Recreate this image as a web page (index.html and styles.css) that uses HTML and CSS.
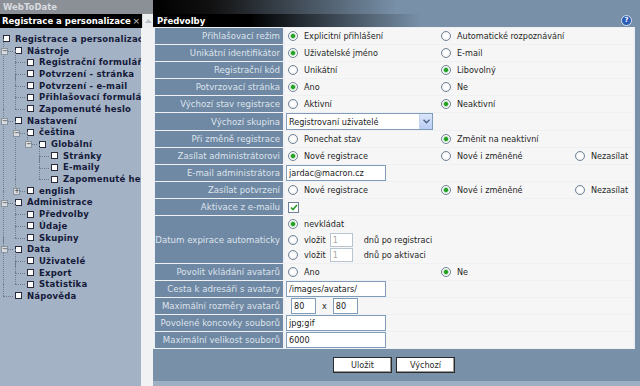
FILE: index.html
```html
<!DOCTYPE html>
<html lang="cs">

<head>
    <meta charset="UTF-8">
    <title>WebToDate | Předvolby</title>
    <link rel="stylesheet" href="styles.css">
</head>

<body>
    <div class="sidebar">
        <div class="app-title">WebToDate</div>
        <div class="panel-head">
            <div class="panel-title">
                <span>Registrace a personalizace</span>
                <span class="close">&times;</span>
            </div>
            <div class="scroll-btn">
                <svg width="7" height="4" viewBox="0 0 7 4"><path d="M0 4 L3.5 0 L7 4 Z" fill="#b9c0c8"/></svg>
            </div>
        </div>
        <div class="panel-body">
            <div class="tree">
                <ul>
                    <li><div class="row"><span class="box"></span>Registrace a personalizace</div>
                        <ul class="sub">
                            <li><span class="exp">&minus;</span><div class="row"><span class="box"></span>Nástroje</div>
                                <ul class="sub">
                                    <li><div class="row"><span class="box"></span>Registrační formulář</div></li>
                                    <li><div class="row"><span class="box"></span>Potvrzení - stránka</div></li>
                                    <li><div class="row"><span class="box"></span>Potvrzení - e-mail</div></li>
                                    <li><div class="row"><span class="box"></span>Přihlašovací formulář</div></li>
                                    <li><div class="row"><span class="box"></span>Zapomenuté heslo</div></li>
                                </ul>
                            </li>
                            <li><span class="exp">&minus;</span><div class="row"><span class="box"></span>Nastavení</div>
                                <ul class="sub">
                                    <li><span class="exp">&minus;</span><div class="row"><span class="box"></span>čeština</div>
                                        <ul class="sub">
                                            <li><span class="exp">&minus;</span><div class="row"><span class="box"></span>Globální</div>
                                                <ul class="sub">
                                                    <li><div class="row"><span class="box"></span>Stránky</div></li>
                                                    <li><div class="row"><span class="box"></span>E-maily</div></li>
                                                    <li><div class="row"><span class="box"></span>Zapomenuté heslo</div></li>
                                                </ul>
                                            </li>
                                        </ul>
                                    </li>
                                    <li><span class="exp">+</span><div class="row"><span class="box"></span>english</div></li>
                                </ul>
                            </li>
                            <li><span class="exp">&minus;</span><div class="row"><span class="box"></span>Administrace</div>
                                <ul class="sub">
                                    <li><div class="row"><span class="box"></span>Předvolby</div></li>
                                    <li><div class="row"><span class="box"></span>Údaje</div></li>
                                    <li><div class="row"><span class="box"></span>Skupiny</div></li>
                                </ul>
                            </li>
                            <li><span class="exp">&minus;</span><div class="row"><span class="box"></span>Data</div>
                                <ul class="sub">
                                    <li><div class="row"><span class="box"></span>Uživatelé</div></li>
                                    <li><div class="row"><span class="box"></span>Export</div></li>
                                    <li><div class="row"><span class="box"></span>Statistika</div></li>
                                </ul>
                            </li>
                            <li><div class="row"><span class="box"></span>Nápověda</div></li>
                        </ul>
                    </li>
                </ul>
            </div>
            <div class="scroll-track"></div>
        </div>
    </div>

    <div class="main">
        <div class="main-head">
            <div class="head-top"></div>
            <div class="head-title">
                <span>Předvolby</span>
                <span class="help">?</span>
            </div>
        </div>

        <table class="prefs">
            <tr>
                <th>Přihlašovací režim</th>
                <td><div class="opts">
                    <label class="opt"><input type="radio" class="radio" name="mode" checked>Explicitní přihlášení</label>
                    <label class="opt"><input type="radio" class="radio" name="mode">Automatické rozpoznávání</label>
                </div></td>
            </tr>
            <tr>
                <th>Unikátní identifikátor</th>
                <td><div class="opts">
                    <label class="opt"><input type="radio" class="radio" name="ident" checked>Uživatelské jméno</label>
                    <label class="opt"><input type="radio" class="radio" name="ident">E-mail</label>
                </div></td>
            </tr>
            <tr>
                <th>Registrační kód</th>
                <td><div class="opts">
                    <label class="opt"><input type="radio" class="radio" name="code">Unikátní</label>
                    <label class="opt"><input type="radio" class="radio" name="code" checked>Libovolný</label>
                </div></td>
            </tr>
            <tr>
                <th>Potvrzovací stránka</th>
                <td><div class="opts">
                    <label class="opt"><input type="radio" class="radio" name="confirm" checked>Ano</label>
                    <label class="opt"><input type="radio" class="radio" name="confirm">Ne</label>
                </div></td>
            </tr>
            <tr>
                <th>Výchozí stav registrace</th>
                <td><div class="opts">
                    <label class="opt"><input type="radio" class="radio" name="state">Aktivní</label>
                    <label class="opt"><input type="radio" class="radio" name="state" checked>Neaktivní</label>
                </div></td>
            </tr>
            <tr>
                <th>Výchozí skupina</th>
                <td><span class="combo">
                    <select><option>Registrovaní uživatelé</option></select>
                    <span class="combo-btn"><svg width="7" height="5" viewBox="0 0 7 5"><path d="M0.5 0.8 L3.5 3.8 L6.5 0.8" fill="none" stroke="#4d6185" stroke-width="1.4"/></svg></span>
                </span></td>
            </tr>
            <tr>
                <th>Při změně registrace</th>
                <td><div class="opts">
                    <label class="opt"><input type="radio" class="radio" name="change">Ponechat stav</label>
                    <label class="opt"><input type="radio" class="radio" name="change" checked>Změnit na neaktivní</label>
                </div></td>
            </tr>
            <tr>
                <th>Zasílat administrátorovi</th>
                <td><div class="opts">
                    <label class="opt"><input type="radio" class="radio" name="admin" checked>Nové registrace</label>
                    <label class="opt"><input type="radio" class="radio" name="admin">Nové i změněné</label>
                    <label class="opt"><input type="radio" class="radio" name="admin">Nezasílat</label>
                </div></td>
            </tr>
            <tr>
                <th>E-mail administrátora</th>
                <td><input type="text" class="field" value="jardac@macron.cz"></td>
            </tr>
            <tr>
                <th>Zasílat potvrzení</th>
                <td><div class="opts">
                    <label class="opt"><input type="radio" class="radio" name="notify">Nové registrace</label>
                    <label class="opt"><input type="radio" class="radio" name="notify" checked>Nové i změněné</label>
                    <label class="opt"><input type="radio" class="radio" name="notify">Nezasílat</label>
                </div></td>
            </tr>
            <tr>
                <th>Aktivace z e-mailu</th>
                <td><span class="checkbox"><svg width="8" height="7" viewBox="0 0 8 7"><path d="M1 3.5 L3 5.5 L7 1" fill="none" stroke="#2a9a2a" stroke-width="1.6"/></svg></span></td>
            </tr>
            <tr class="tall">
                <th>Datum expirace automaticky</th>
                <td>
                    <label class="opt line"><input type="radio" class="radio" name="expire" checked>nevkládat</label>
                    <label class="opt line"><input type="radio" class="radio" name="expire">vložit <input type="text" class="days" value="1" disabled> dnů po registraci</label>
                    <label class="opt line"><input type="radio" class="radio" name="expire">vložit <input type="text" class="days" value="1" disabled> dnů po aktivaci</label>
                </td>
            </tr>
            <tr>
                <th>Povolit vkládání avatarů</th>
                <td><div class="opts">
                    <label class="opt"><input type="radio" class="radio" name="avatar">Ano</label>
                    <label class="opt"><input type="radio" class="radio" name="avatar" checked>Ne</label>
                </div></td>
            </tr>
            <tr>
                <th>Cesta k adresáři s avatary</th>
                <td><input type="text" class="field" value="/images/avatars/"></td>
            </tr>
            <tr>
                <th>Maximální rozměry avatarů</th>
                <td><div class="size">
                    <input type="text" class="field small" value="80">
                    <span>x</span>
                    <input type="text" class="field small" value="80">
                </div></td>
            </tr>
            <tr>
                <th>Povolené koncovky souborů</th>
                <td><input type="text" class="field" value="jpg;gif"></td>
            </tr>
            <tr>
                <th>Maximální velikost souborů</th>
                <td><input type="text" class="field" value="6000"></td>
            </tr>
        </table>

        <div class="actions">
            <button class="btn">Uložit</button>
            <button class="btn">Výchozí</button>
        </div>
        <div class="bottom"></div>
    </div>
</body>

</html>
```

FILE: styles.css
```css
html,
body {
    margin: 0;
}

body {
    display: flex;
    height: 386px;
    overflow: hidden;
    font-family: "DejaVu Sans Condensed", "DejaVu Sans", sans-serif;
    font-stretch: condensed;
    font-size: 9px;
    color: #262626;
    background-color: #7890a8;
}

/* left panel */

.sidebar {
    width: 153px;
    display: flex;
    flex-direction: column;
    flex-shrink: 0;
}

.app-title,
.panel-title,
.tree,
.head-title {
    font-family: "DejaVu Sans", sans-serif;
    font-stretch: normal;
    font-weight: bold;
    font-size: 8.5px;
}

.app-title {
    height: 14px;
    line-height: 14px;
    padding-left: 3px;
    background-color: #8b9097;
    color: #d9dce0;
}

.panel-head {
    display: flex;
    height: 14px;
}

.panel-title {
    flex: 1;
    display: flex;
    justify-content: space-between;
    align-items: center;
    padding: 0 2px;
    background-color: #000;
    color: #fff;
    white-space: nowrap;
    overflow: hidden;
}

.panel-title .close {
    color: #c8c8c8;
    font-weight: normal;
    font-size: 9px;
}

.scroll-btn {
    width: 10px;
    display: flex;
    align-items: center;
    justify-content: center;
    background-color: #eceef0;
    border-left: 1px solid #d5d9de;
}

.panel-body {
    flex: 1;
    display: flex;
}

.tree {
    flex: 1;
    background-color: #a3b2c4;
    padding-top: 5px;
    overflow: hidden;
    white-space: nowrap;
    letter-spacing: 0.2px;
    color: #151a3a;
}

.scroll-track {
    width: 12px;
    background-color: #f1f2f3;
}

.tree ul {
    list-style: none;
    margin: 0;
    padding: 0 0 0 3px;
}

.tree ul.sub {
    padding-left: 12px;
}

.tree li {
    position: relative;
}

.tree .row {
    height: 11.7px;
    display: flex;
    align-items: center;
    gap: 5px;
}

.tree .box {
    width: 5px;
    height: 5px;
    border: 1px solid #2a2a3a;
    background-color: #fff;
    flex-shrink: 0;
}

/* dotted tree lines */
.tree ul.sub > li::before {
    content: "";
    position: absolute;
    left: -12px;
    top: -6px;
    height: calc(100% + 6px);
    border-left: 1px dotted #707a88;
}

.tree ul.sub > li:last-child::before {
    height: 12px;
}

.tree ul.sub > li::after {
    content: "";
    position: absolute;
    left: -12px;
    top: 6px;
    width: 10px;
    border-top: 1px dotted #707a88;
}

.tree .exp {
    position: absolute;
    z-index: 1;
    left: -14px;
    top: 3px;
    width: 5px;
    height: 5px;
    line-height: 5px;
    border: 1px solid #8a929c;
    background-color: #d8dde3;
    color: #333;
    font-size: 7px;
    font-weight: normal;
    letter-spacing: 0;
    text-align: center;
}

/* right panel */

.main {
    flex: 1;
    display: flex;
    flex-direction: column;
}

.main-head {
    height: 27px;
    display: flex;
    flex-direction: column;
}

.head-top {
    height: 14px;
    background: linear-gradient(to right, #000 0%, #111 12%, #7890a8 50%);
}

.head-title {
    flex: 1;
    display: flex;
    justify-content: space-between;
    align-items: center;
    padding: 0 8px 0 4px;
    background: linear-gradient(to right, #000 0%, #000 20%, #7890a8 55%);
    color: #fff;
}

.help {
    width: 9px;
    height: 9px;
    line-height: 9px;
    border-radius: 50%;
    border: 1px solid #d8e2ee;
    background-color: #2a5cb5;
    color: #fff;
    font-size: 7px;
    text-align: center;
}

.prefs {
    width: 482px;
    border-collapse: separate;
    border-spacing: 2px 1px;
    background-color: #eef0f3;
}

.prefs th {
    width: 125px;
    height: 16px;
    padding: 0 3px 0 0;
    background-color: #6f88a4;
    color: #dde4ec;
    font-family: "DejaVu Sans", sans-serif;
    font-stretch: normal;
    font-size: 8.6px;
    font-weight: normal;
    text-align: right;
    white-space: nowrap;
}

.prefs td {
    height: 16px;
    padding: 0 0 0 1px;
    background-color: #f6f6f6;
    white-space: nowrap;
}

.prefs tr.tall th,
.prefs tr.tall td {
    height: 47px;
}

.opts {
    display: grid;
    grid-template-columns: 153px 134px auto;
    align-items: center;
}

.opt {
    display: flex;
    align-items: center;
    gap: 5px;
    padding-left: 2px;
}

.opt.line {
    height: 15.6px;
}

.radio {
    appearance: none;
    margin: 0 1px 0 0;
    width: 10px;
    height: 10px;
    border-radius: 50%;
    border: 1px solid #6f8397;
    background: radial-gradient(circle, #fff 0, #fff 2px, #e6e6e6 5px);
    flex-shrink: 0;
}

.radio:checked {
    background: radial-gradient(circle, #25a125 0, #25a125 1.6px, #b4deb4 2.4px, #fff 3.4px, #e6e6e6 5px);
}

.field {
    box-sizing: border-box;
    width: 100px;
    height: 16px;
    margin: 0;
    padding: 0 2px;
    border: 1px solid #7f9db9;
    background-color: #fff;
    font: inherit;
    color: #1a1a1a;
}

.field.small {
    width: 25px;
}

.size {
    display: flex;
    align-items: center;
    gap: 6px;
    padding-left: 5px;
}

.days {
    box-sizing: border-box;
    width: 23px;
    height: 14px;
    margin: 0 6px 0 -1px;
    padding: 0 2px;
    border: 1px solid #b8c4d0;
    background-color: #fff;
    font: inherit;
    color: #a8a8a8;
}

.combo {
    display: inline-flex;
    box-sizing: border-box;
    width: 147px;
    height: 17px;
    border: 1px solid #7f9db9;
    background-color: #fff;
    vertical-align: middle;
}

.combo select {
    flex: 1;
    appearance: none;
    border: none;
    outline: 0;
    padding: 0 2px;
    background: transparent;
    font: inherit;
    color: #1a1a1a;
}

.combo-btn {
    width: 12px;
    display: flex;
    align-items: center;
    justify-content: center;
    background: linear-gradient(#dbe6fb, #b9cdf3);
    border-left: 1px solid #c3d3ee;
}

.checkbox {
    display: inline-flex;
    align-items: center;
    justify-content: center;
    width: 9px;
    height: 9px;
    margin-left: 2px;
    border: 1px solid #6f8397;
    background-color: #fff;
    vertical-align: middle;
}

.actions {
    height: 32px;
    display: flex;
    justify-content: center;
    align-items: center;
    gap: 4px;
    padding-right: 5px;
}

.btn {
    width: 59px;
    height: 16px;
    padding: 0;
    border: 1px solid #2a2a2a;
    box-shadow: inset -1px -1px #9a9a9a;
    background-color: #fff;
    font: inherit;
    color: #2a2a2a;
}

.bottom {
    flex: 1;
    background-color: #9fb0c2;
}
```
